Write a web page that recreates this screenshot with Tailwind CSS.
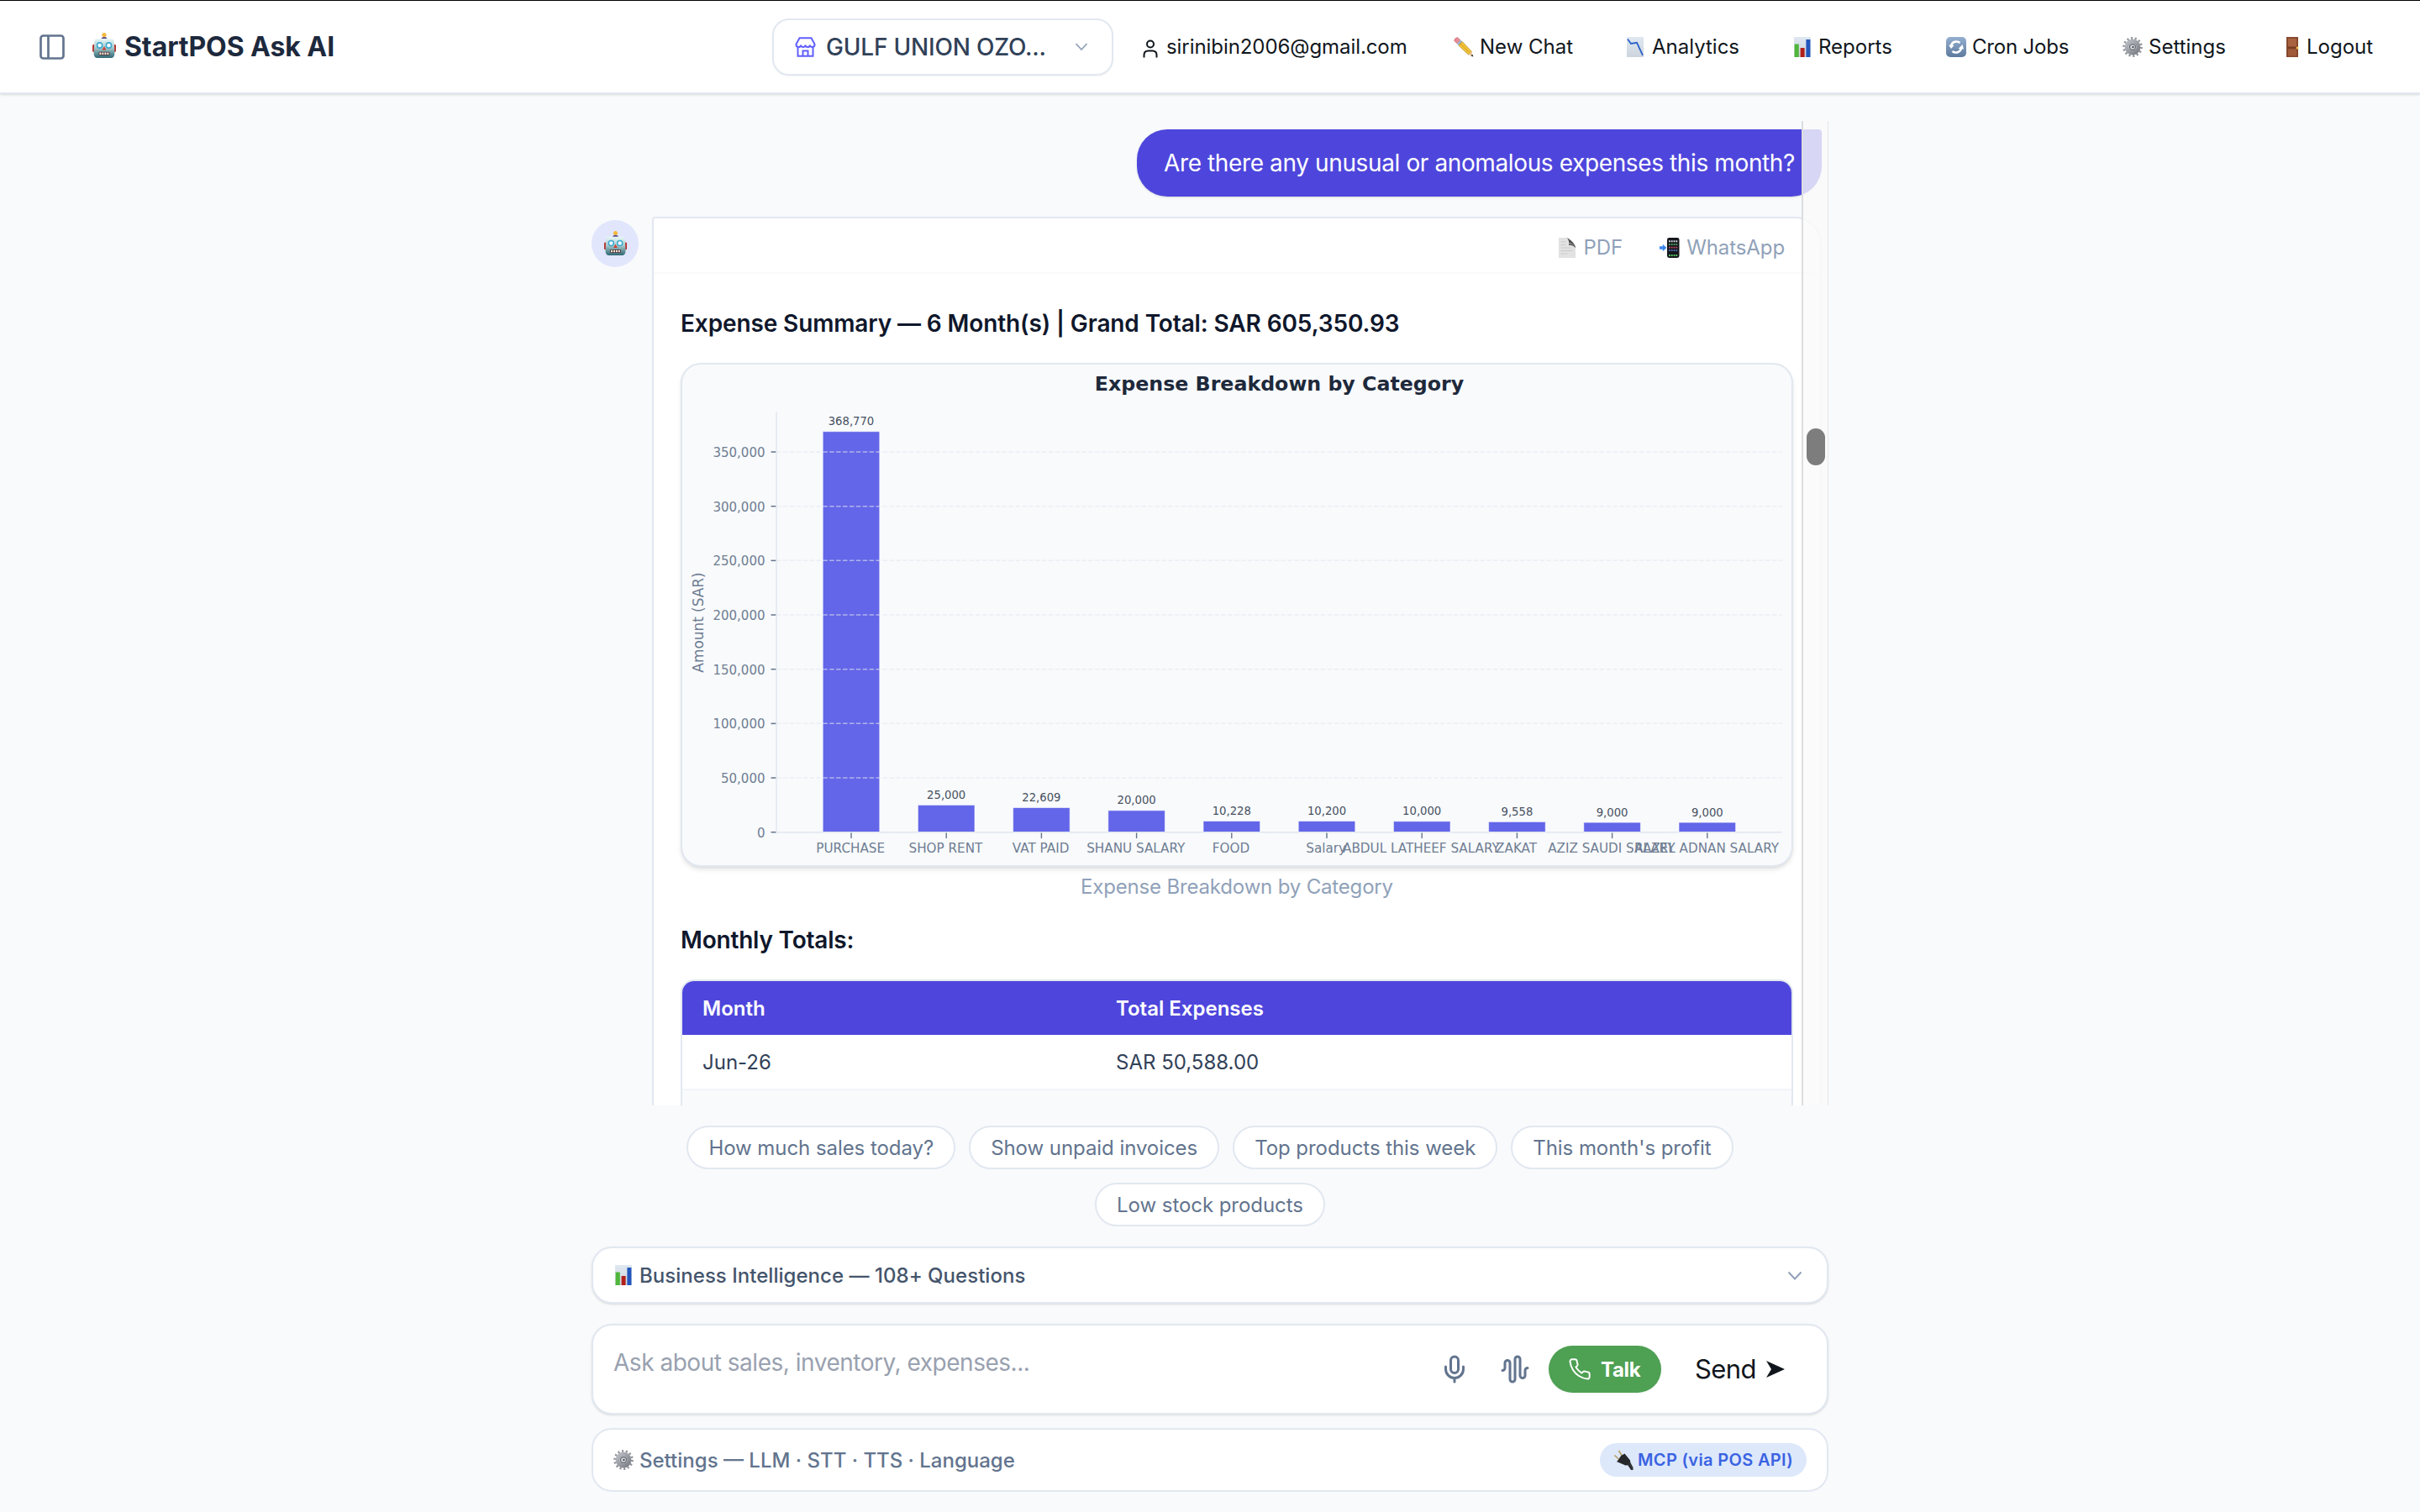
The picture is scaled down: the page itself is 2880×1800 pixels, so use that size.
<!DOCTYPE html>
<html lang="en">
<head>
    <meta charset="UTF-8">
    <meta name="viewport" content="width=device-width, initial-scale=1.0">
    <title>StartPOS Ask AI</title>
    <script src="https://cdn.jsdelivr.net/npm/@tailwindcss/browser@4"></script>
</head>
<body class="bg-slate-50 h-[1800px] overflow-hidden font-['Inter','Liberation_Sans',sans-serif] text-slate-900">

    <!-- Shared icons -->
    <svg class="absolute size-0">
        <defs>
            <linearGradient id="g-robot" x1="0" y1="0" x2="0" y2="1"><stop offset="0" stop-color="#e9f7f6"/><stop offset=".45" stop-color="#a9cdd0"/><stop offset="1" stop-color="#2f6672"/></linearGradient>
            <linearGradient id="g-paper" x1="0" y1="0" x2="0" y2="1"><stop offset="0" stop-color="#dfe8f1"/><stop offset="1" stop-color="#cdd4dd"/></linearGradient>
            <linearGradient id="g-blue" x1="0" y1="0" x2="0" y2="1"><stop offset="0" stop-color="#94afd0"/><stop offset="1" stop-color="#5d7a9d"/></linearGradient>
            <linearGradient id="g-steel" x1="0" y1="0" x2="1" y2="1"><stop offset="0" stop-color="#b9bcc2"/><stop offset="1" stop-color="#7c7f86"/></linearGradient>
        </defs>
        <symbol id="robot" viewBox="0 0 30 32">
            <circle cx="15" cy="3.6" r="2.6" fill="#f6b73c"/>
            <path d="M11.5 8.5q0-2.6 3.5-2.6t3.5 2.6z" fill="#5a4a86"/>
            <rect x="1" y="15" width="3" height="9" rx="1.4" fill="#b8322c"/>
            <rect x="26" y="15" width="3" height="9" rx="1.4" fill="#b8322c"/>
            <path d="M7 8h16q3.6 0 3.8 4l.6 13q0 6-4.4 6h-16q-4.4 0-4.4-6l.6-13q.2-4 3.8-4z" fill="url(#g-robot)"/>
            <circle cx="9.6" cy="16" r="3.9" fill="#3fa9cf"/><circle cx="9.6" cy="16" r="2.3" fill="#f4fcff"/>
            <circle cx="20.4" cy="16" r="3.9" fill="#3fa9cf"/><circle cx="20.4" cy="16" r="2.3" fill="#f4fcff"/>
            <path d="M15 17l2.4 4.6h-4.8z" fill="#cf3d2e"/>
            <rect x="8.5" y="23.8" width="13" height="4" rx="1" fill="#4b2a2a"/>
            <path d="M9.4 25.8h11.6" stroke="#f6f3ea" stroke-width="2.4" stroke-dasharray="2 1"/>
        </symbol>
        <symbol id="pencil" viewBox="0 0 24 24">
            <path d="M.6 4.6q.4-3.600 4-4l3.600 3.400-4 4z" fill="#e88a94" stroke="#c66a74" stroke-width=".6"/>
            <path d="M3.800 8l4.400-4.400 2.200 2.200-4.400 4.400z" fill="#9db4cf"/>
            <path d="M5.800 10l4.400-4.400 11.300 12-3.700 3.600z" fill="#f5c93c" stroke="#a87a20" stroke-width=".7"/>
            <path d="M8 8l11.800 11.600" stroke="#dba326" stroke-width="1.2"/>
            <path d="M21.300 17.500l1.900 5.900-5.600-2.300z" fill="#e8c79a"/><path d="M22.300 20.800l1.200 2.800-3-1.100z" fill="#222"/>
        </symbol>
        <symbol id="trend" viewBox="0 0 24 24">
            <rect x="2" y="0" width="20" height="24" fill="url(#g-paper)"/>
            <path d="M3 2.500l4 5.500 7-1.200 7 15" fill="none" stroke="#2b62c9" stroke-width="1.800"/>
        </symbol>
        <symbol id="bars" viewBox="0 0 24 24">
            <rect x="2" y="0" width="20" height="24" fill="url(#g-paper)"/>
            <rect x="2.600" y="8.500" width="5.200" height="15.500" fill="#4fb63a"/>
            <rect x="9.600" y="13" width="5" height="11" fill="#b3201c"/>
            <rect x="16.400" y="3" width="5" height="21" fill="#2357bd"/>
        </symbol>
        <symbol id="cycle" viewBox="0 0 24 24">
            <rect width="24" height="24" rx="5" fill="url(#g-blue)"/>
            <path d="M6 10.500a6.500 6.500 0 0 1 10.500-3.500M18 13.500a6.500 6.500 0 0 1-10.500 3.500" fill="none" stroke="#fff" stroke-width="2.600"/>
            <path d="M3 9.500l6.500.5-3.500 4zM21 14.500l-6.500-.5 5-5z" fill="#fff"/>
        </symbol>
        <symbol id="gear" viewBox="0 0 24 24">
            <circle cx="12" cy="12" r="10.400" fill="none" stroke="#93969c" stroke-width="3" stroke-dasharray="2.100 2.567"/>
            <circle cx="12" cy="12" r="6.900" fill="none" stroke="url(#g-steel)" stroke-width="5"/>
            <circle cx="12" cy="12" r="4.200" fill="#686b72"/>
            <circle cx="12" cy="12" r="2.800" fill="#dcdee3"/><circle cx="12.400" cy="12" r="1.200" fill="#4b4d52"/>
        </symbol>
        <symbol id="door" viewBox="0 0 24 24">
            <rect x="5" y="0" width="14" height="24" fill="#85482c"/>
            <rect x="7" y="1.800" width="10" height="9.500" fill="#a9623f"/><rect x="7" y="14.500" width="10" height="8" fill="#a05a39"/>
            <path d="M6 12.800h12" stroke="#6b3620" stroke-width="1"/>
            <circle cx="18" cy="13" r="1.500" fill="#ecc34a"/>
        </symbol>
        <symbol id="page" viewBox="0 0 24 24">
            <path d="M2 0h11l9 10v14h-20z" fill="#e2e2e2"/>
            <path d="M12 0q3 4 2 9 4-1 8 3-.500-6-10-12z" fill="#4a4a4a"/>
            <path d="M14 8q5-1 8 4v-2q-3-3-8-5z" fill="#8a8a8a"/>
            <path d="M4.500 5h6M4.500 8.500h6M4.500 12h12M4.500 15.500h14M4.500 19h8" stroke="#cacaca" stroke-width="1.200"/>
        </symbol>
        <symbol id="mobile" viewBox="0 0 24 24">
            <rect x="9" y="0" width="14.500" height="24" rx="2.400" fill="#16181c"/>
            <path d="M11 4.200h10.500" stroke="#d8dde4" stroke-width="2" stroke-dasharray="1.800 1"/>
            <path d="M11 8h10.500" stroke="#4a9c5b" stroke-width="1.800" stroke-dasharray="1.800 1"/>
            <path d="M11 11.600h10.500" stroke="#c64a6a" stroke-width="1.800" stroke-dasharray="1.800 1"/>
            <path d="M11 15.200h10.500" stroke="#4f77c9" stroke-width="1.800" stroke-dasharray="1.800 1"/>
            <path d="M11 21h10.500" stroke="#58c96a" stroke-width="2" stroke-dasharray="1.800 1"/>
            <path d="M0 10.300h3.800v-2.600l4.600 4.300-4.600 4.300v-2.600h-3.800z" fill="#3c86ea"/>
        </symbol>
        <symbol id="plug" viewBox="0 0 24 24">
            <path d="M6.500 1l5 8M1.500 6.500l6.500 6" stroke="#b49b58" stroke-width="1.500"/>
            <path d="M13.500 4.500l6.500 8 .5 5.500-6 .5-10.500-4.500q2-1.500 3.500-4.500 2-3.500 6-5z" fill="#26272a"/>
            <path d="M16 16.500l4-2 3.500 6.500v3h-2.500z" fill="#2f3034"/>
        </symbol>
    </svg>

    <header class="h-28 bg-white border-t border-t-black border-b-2 border-b-slate-200 shadow-sm flex items-center pl-11">
        <svg class="size-9 text-slate-500" viewBox="0 0 24 24" fill="none" stroke="currentColor" stroke-width="1.800"><rect x="3" y="3" width="18" height="18" rx="2"/><path d="M9 3v18"/></svg>
        <svg class="ml-[29px] -mt-1 w-[30px] h-8"><use href="#robot"/></svg>
        <h1 class="ml-[9px] w-[249px] text-[32px] font-bold tracking-[-0.08px] text-slate-800 whitespace-nowrap">StartPOS Ask AI</h1>

        <button class="ml-[522px] w-[406px] h-[68px] flex items-center rounded-[20px] border-2 border-slate-200 bg-white shadow-xs pl-[25px]">
            <svg class="w-[25px] h-6 text-indigo-500" viewBox="0 0 25 24" fill="none" stroke="currentColor" stroke-width="2"><path d="M5.500 1.200h14l4 7.300c.4 4.300-5 4.600-5.600 1.200-.6 3.200-5 3.200-5.400 0-.5 3.200-4.900 3.200-5.400 0-.7 3.400-6 3.100-5.600-1.200zM3.500 12.500v10.300h18v-10.300M9.500 22.800v-6.300h6v6.300"/></svg>
            <span class="ml-3 w-[264px] text-left text-[28px] font-medium tracking-[-0.2px] text-slate-700 whitespace-nowrap">GULF UNION OZO...</span>
            <svg class="ml-[32px] w-4 h-2.5 text-slate-400" viewBox="0 0 16 10" fill="none" stroke="currentColor" stroke-width="1.800"><path d="M1.500 1l6.500 7 6.500-7"/></svg>
        </button>

        <nav class="ml-[35px] grid grid-cols-[370px_204px_199px_183px_210px_190px_auto] text-2xl text-[#10161c] whitespace-nowrap">
            <a class="flex items-center"><svg class="mt-1 w-[18px] h-[22px]" viewBox="0 0 18 22" fill="none" stroke="currentColor" stroke-width="2"><circle cx="9" cy="5.500" r="4"/><path d="M1.500 21.500v-3q0-5 5-5h5q5 0 5 5v3"/></svg><span class="ml-2.5 tracking-[-0.07px]">sirinibin2006@gmail.com</span></a>
            <a class="flex items-center gap-[7px]"><svg class="size-6"><use href="#pencil"/></svg>New Chat</a>
            <a class="flex items-center gap-2"><svg class="size-6"><use href="#trend"/></svg>Analytics</a>
            <a class="flex items-center gap-[7px]"><svg class="size-6"><use href="#bars"/></svg>Reports</a>
            <a class="flex items-center gap-[7px] tracking-[-0.2px]"><svg class="size-6"><use href="#cycle"/></svg>Cron Jobs</a>
            <a class="flex items-center gap-[7px]"><svg class="size-6"><use href="#gear"/></svg>Settings</a>
            <a class="flex items-center gap-[5px]"><svg class="size-6"><use href="#door"/></svg>Logout</a>
        </nav>
    </header>

    <main class="w-[1472px] mx-auto pt-8">
        <!-- Messages -->
        <section class="relative h-[1172px] overflow-hidden pt-2.5 pr-2">
            <div class="ml-auto w-[815px] h-20 flex items-center pl-8 rounded-[36px] rounded-tr bg-[#4e46dc] text-white text-[28px] tracking-[-0.38px] whitespace-nowrap shadow-sm">Are there any unusual or anomalous expenses this month?</div>

            <div class="mt-6 flex gap-4">
                <div class="mt-1 size-14 shrink-0 rounded-full bg-[#e1e6fc] flex items-center justify-center"><svg class="-mt-0.5 w-[29px] h-[31px]"><use href="#robot"/></svg></div>
                <article class="flex-1 h-[1200px] bg-white border-2 border-slate-200 rounded-[32px] rounded-tl">
                    <div class="h-[66px] border-b-2 border-slate-50 flex items-center justify-end gap-11 pt-[5px] pr-[42px] text-2xl text-slate-400">
                        <span class="flex items-center gap-[7px]"><svg class="size-6"><use href="#page"/></svg>PDF</span>
                        <span class="flex items-center gap-2 tracking-[-0.1px]"><svg class="size-6"><use href="#mobile"/></svg>WhatsApp</span>
                    </div>
                    <div class="px-8">
                        <h3 class="mt-[35px] text-[28px] leading-[48px] font-semibold tracking-[-0.12px]">Expense Summary — 6 Month(s) | Grand Total: SAR 605,350.93</h3>
                        <div class="mt-[23px] h-[600px] rounded-[24px] border-2 border-slate-200 bg-slate-50 shadow-md">
                            <svg id="chart" class="w-full h-full font-['DejaVu_Sans',sans-serif]" viewBox="0 0 1320 596" preserveAspectRatio="none"></svg>
                        </div>
                        <p class="mt-1.5 text-center text-2xl leading-9 tracking-[-0.17px] text-slate-400">Expense Breakdown by Category</p>
                        <h3 class="mt-[21px] text-[28px] leading-[48px] font-semibold tracking-[-0.2px]">Monthly Totals:</h3>
                        <div class="mt-[23px] border-2 border-slate-200 rounded-[16px] overflow-hidden text-2xl">
                            <div class="h-16 pt-px grid grid-cols-[491px_1fr] items-center pl-6 bg-[#4e46dc] text-white font-semibold"><span>Month</span><span class="pl-px">Total Expenses</span></div>
                            <div class="h-[66px] pt-px grid grid-cols-[491px_1fr] items-center pl-6 bg-white border-b-2 border-slate-100 text-slate-700"><span>Jun-26</span><span class="pl-px">SAR 50,588.00</span></div>
                            <div class="h-[66px] bg-slate-50"></div>
                        </div>
                    </div>
                </article>
            </div>

            <!-- Scrollbar -->
            <div class="absolute right-0 top-0 w-8 h-full bg-[#fafafa]/80 border-l-2 border-l-[#dddddf] border-r border-r-[#e6e6e8]">
                <div class="absolute left-1 top-[366px] w-[22px] h-11 rounded-full bg-[#7d7d7d]"></div>
            </div>
        </section>

        <!-- Suggestions -->
        <div class="mt-6 flex flex-wrap justify-center gap-4 text-2xl tracking-[-0.06px] text-slate-500">
            <button class="h-[52px] px-6 pt-px rounded-full border-2 border-slate-200 bg-white">How much sales today?</button>
            <button class="h-[52px] px-6 pt-px rounded-full border-2 border-slate-200 bg-white">Show unpaid invoices</button>
            <button class="h-[52px] px-6 pt-px rounded-full border-2 border-slate-200 bg-white">Top products this week</button>
            <button class="h-[52px] px-6 pt-px rounded-full border-2 border-slate-200 bg-white">This month's profit</button>
            <button class="h-[52px] px-6 pt-px rounded-full border-2 border-slate-200 bg-white">Low stock products</button>
        </div>

        <div class="mt-6 h-[68px] flex items-center rounded-[24px] border-2 border-slate-200 bg-white shadow-sm pl-6 pr-[29px] text-2xl font-medium text-slate-600">
            <svg class="size-6"><use href="#bars"/></svg>
            <span class="ml-[7px] pt-px tracking-[0.03px]">Business Intelligence — 108+ Questions</span>
            <svg class="ml-auto w-[18px] h-[11px] text-slate-400" viewBox="0 0 18 11" fill="none" stroke="currentColor" stroke-width="2"><path d="M1.500 1.500l7.500 8 7.500-8"/></svg>
        </div>

        <div class="mt-6 h-[108px] flex items-center rounded-[24px] border-2 border-slate-200 bg-white shadow-sm pl-6">
            <span class="-mt-4 w-[983px] text-[28px] tracking-[-0.48px] text-gray-400">Ask about sales, inventory, expenses...</span>
            <svg class="size-9 text-slate-500" viewBox="0 0 24 24" fill="none" stroke="currentColor" stroke-width="2" stroke-linecap="round" stroke-linejoin="round"><path d="M12 19v3M19 10v2a7 7 0 0 1-14 0v-2"/><rect x="9" y="2" width="6" height="13" rx="3"/></svg>
            <svg class="ml-9 size-9 text-slate-500" viewBox="0 0 24 24" fill="none" stroke="currentColor" stroke-width="2" stroke-linecap="round" stroke-linejoin="round"><path d="M2 13a2 2 0 0 0 2-2V7a2 2 0 0 1 4 0v13a2 2 0 0 0 4 0V4a2 2 0 0 1 4 0v13a2 2 0 0 0 4 0v-4a2 2 0 0 1 2-2"/></svg>
            <button class="ml-[22px] w-[134px] h-14 rounded-full bg-[#4ea053] text-white text-2xl font-bold flex items-center pl-[23px] shadow-xs">
                <svg class="size-7" viewBox="0 0 24 24" fill="none" stroke="currentColor" stroke-width="1.700" stroke-linecap="round" stroke-linejoin="round"><path d="M22 16.920v3a2 2 0 0 1-2.180 2 19.790 19.790 0 0 1-8.630-3.070 19.500 19.500 0 0 1-6-6 19.790 19.790 0 0 1-3.070-8.670A2 2 0 0 1 4.110 2h3a2 2 0 0 1 2 1.720 12.840 12.840 0 0 0 .7 2.810 2 2 0 0 1-.45 2.110L8.090 9.910a16 16 0 0 0 6 6l1.270-1.270a2 2 0 0 1 2.110-.45 12.840 12.840 0 0 0 2.810.7A2 2 0 0 1 22 16.920z"/></svg>
                <span class="ml-[11px] pt-px tracking-[-0.3px]">Talk</span>
            </button>
            <button class="ml-10 flex items-center text-[31px] tracking-[-0.6px] text-[#10161c]">Send<svg class="ml-3 w-[22px] h-5" viewBox="0 0 22 20"><path d="M0 0l22 10-22 10 6-10z" fill="currentColor"/></svg></button>
        </div>

        <div class="mt-4 h-[76px] flex items-center rounded-[24px] border-2 border-slate-200 bg-white px-6 text-2xl font-medium text-slate-500">
            <svg class="size-6"><use href="#gear"/></svg>
            <span class="ml-[7px] pt-px">Settings — LLM · STT · TTS · Language</span>
            <span class="ml-auto w-[246px] h-10 rounded-full bg-[#dde8fb] flex items-center pl-4 text-xl font-semibold tracking-[0.35px] text-[#3a63e2]"><svg class="mr-[5px] size-6"><use href="#plug"/></svg>MCP (via POS API)</span>
        </div>
    </main>

    <script>
        const expenses = [
            ['PURCHASE', 368770], ['SHOP RENT', 25000], ['VAT PAID', 22609], ['SHANU SALARY', 20000], ['FOOD', 10228],
            ['Salary', 10200], ['ABDUL LATHEEF SALARY', 10000], ['ZAKAT', 9558], ['AZIZ SAUDI SALARY', 9000], ['RAZEL ADNAN SALARY', 9000],
        ];
        const left = 112, right = 1308.5, base = 556.7;
        const scaleY = (value) => base - value * 64.67 / 50000;

        let bars = '', grid = '', labels = '';
        expenses.forEach(([name, value], i) => {
            const x = 201 + i * 113.2;
            const y = scaleY(value);
            bars += `<rect x="${x - 33.8}" y="${y}" width="67.6" height="${base - y}" fill="#6366e8" stroke="#ffffff" stroke-opacity=".6" stroke-width="1"/>`;
            labels += `<path d="M${x} 557.5v6.5" stroke="#64748b" stroke-width="1.4"/>
                <text x="${x}" y="${y - 7.500}" font-size="13.2" fill="#475060" text-anchor="middle">${value.toLocaleString('en-US')}</text>
                <text x="${x - 0.800}" y="581" font-size="15.2" fill="#6f7d92" text-anchor="middle">${name}</text>`;
        });
        for (let v = 0; v <= 350000; v += 50000) {
            const y = scaleY(v);
            grid += `<path d="M${left} ${y}H${right}" stroke="#e2e8f0" stroke-opacity=".6" stroke-width="1.5" stroke-dasharray="5.5 2.4"/>
                <path d="M${left - 6.5} ${y}h6.5" stroke="#64748b" stroke-width="1.5"/>
                <text x="98.5" y="${y + 6}" font-size="15" fill="#6f7d92" text-anchor="end">${v.toLocaleString('en-US')}</text>`;
        }
        document.getElementById('chart').innerHTML = `
            ${bars}${grid}
            <path d="M${left} 56V${base}H${right}" fill="none" stroke="#e2e8f0" stroke-width="1.5"/>
            ${labels}
            <text x="710.5" y="30.5" font-size="23.7" font-weight="700" fill="#1e293b" text-anchor="middle">Expense Breakdown by Category</text>
            <text transform="translate(24.500 307) rotate(-90)" font-size="16.9" fill="#6f7d92" text-anchor="middle">Amount (SAR)</text>`;
    </script>
</body>
</html>
